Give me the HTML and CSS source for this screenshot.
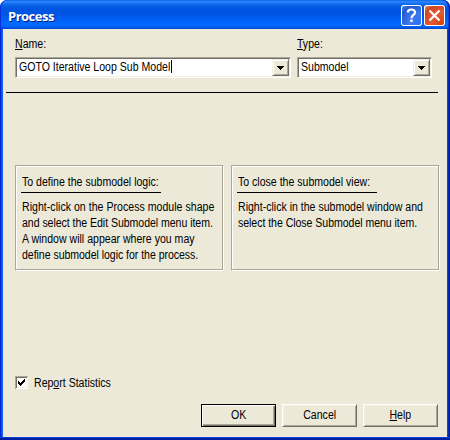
FILE: index.html
```html
<!DOCTYPE html>
<html lang="en">
<head>
<meta charset="utf-8">
<title>Process</title>
<link rel="stylesheet" href="styles.css">
</head>
<body>
<div class="window">
  <header class="titlebar">
    <h1>Process</h1>
    <button class="caption help" aria-label="Help">
      <svg width="21" height="21" viewBox="0 0 21 21"><path d="M6.8 7.5C6.8 3.6 14 3.4 14 7.4C14 10 10.5 9.8 10.5 13.2" fill="none" stroke="#fff" stroke-width="2.2"/><path d="M9.3 14.6h2.4v2.4H9.3z" fill="#fff"/></svg>
    </button>
    <button class="caption close" aria-label="Close">
      <svg width="21" height="21" viewBox="0 0 21 21"><path d="M5.5 5.5l10 10M15.5 5.5l-10 10" stroke="#fff" stroke-width="2.2"/></svg>
    </button>
  </header>
  <main class="client">
    <div class="fields">
      <div class="field name">
        <label><span class="text"><u>N</u>ame:</span></label>
        <div class="combo"><span class="value"><span class="text">GOTO Iterative Loop Sub Model</span></span><i class="caret"></i><span class="drop"><svg width="7" height="4" viewBox="0 0 7 4" shape-rendering="crispEdges"><path d="M0 0h7v1H0zM1 1h5v1H1zM2 2h3v1H2zM3 3h1v1H3z"/></svg></span></div>
      </div>
      <div class="field type">
        <label><span class="text"><u>T</u>ype:</span></label>
        <div class="combo"><span class="value"><span class="text">Submodel</span></span><span class="drop"><svg width="7" height="4" viewBox="0 0 7 4" shape-rendering="crispEdges"><path d="M0 0h7v1H0zM1 1h5v1H1zM2 2h3v1H2zM3 3h1v1H3z"/></svg></span></div>
      </div>
    </div>
    <div class="rule"></div>
    <div class="groups">
      <section class="group">
        <h2><span class="text">To define the submodel logic:</span></h2>
        <p><span class="text loose">Right-click on the Process module shape</span></p>
        <p><span class="text tight">and select the Edit Submodel menu item.</span></p>
        <p><span class="text">A window will appear where you may</span></p>
        <p><span class="text tight">define submodel logic for the process.</span></p>
      </section>
      <section class="group">
        <h2><span class="text">To close the submodel view:</span></h2>
        <p><span class="text">Right-click in the submodel window and</span></p>
        <p><span class="text tight">select the Close Submodel menu item.</span></p>
      </section>
    </div>
    <div class="check">
      <span class="box"><svg width="7" height="7" viewBox="0 0 7 7" shape-rendering="crispEdges"><path d="M0 2h1v1h1v1h1V3h1V2h1V1h1V0h1v3H6v1H5v1H4v1H3v1H2V6H1V5H0z"/></svg></span>
      <span class="text">Rep<u>o</u>rt Statistics</span>
    </div>
    <footer class="buttons">
      <button class="btn default"><span class="text mid">OK</span></button>
      <button class="btn"><span class="text mid">Cancel</span></button>
      <button class="btn"><span class="text mid"><u>H</u>elp</span></button>
    </footer>
  </main>
</div>
</body>
</html>
```
FILE: styles.css
```css
* { box-sizing: border-box; }
body { margin: 0; background: #fff; font: 12px/16px "Liberation Sans", Arial, sans-serif; color: #000; }
h1, h2, p { margin: 0; font-weight: normal; font-size: inherit; }
button { padding: 0; border: 0; font: inherit; color: inherit; }
svg { display: block; }
u { text-decoration: underline; text-underline-offset: 1px; text-decoration-thickness: 1px; text-decoration-skip-ink: none; }

/* condensed dialog lettering */
.text { display: inline-block; white-space: nowrap; transform: scaleX(.88); transform-origin: 0 50%; }
.loose { letter-spacing: .03px; }
.tight { letter-spacing: -.05px; }
.mid { transform-origin: 50% 50%; }

.window {
  width: 450px; height: 440px; display: flex; flex-direction: column;
  padding: 0 3px 3px; border-radius: 7px 7px 0 0; overflow: hidden;
  background: linear-gradient(90deg, #0019cf 0, #0831d9 1px, #166aee 2px, #0855dd 3px, #0855dd 447px, #0441d8 448px, #001ea0 449px, #00138c 450px);
  box-shadow: inset 0 -2px #001ea0, inset 0 -3px #0441d8;
}
.titlebar {
  height: 29px; margin: 0 -3px; padding: 5px 5px 0 8px; display: flex; gap: 2px; flex: none;
  background: linear-gradient(#0058e6 0, #2a82f8 1px, #2a86fa 2px, #0f6af0 4px, #0560e6 6px, #0055e2 9px, #0054e3 14px, #005ef4 19px, #0168ff 23px, #0066fb 26px, #0053e2 28px, #0041cd 29px);
  box-shadow: inset 1px 0 #0831d9, inset -1px 0 #001ea0, inset -2px 0 #0441d8;
  border-radius: 7px 7px 0 0;
}
.titlebar h1 { flex: 1; font: bold 13px/22px "Open Sans", sans-serif; letter-spacing: -.5px; color: #fff; text-shadow: 1px 1px #0a1f8c; }
.caption { width: 21px; height: 21px; border-radius: 3px; box-shadow: inset 0 0 0 1px #fff; }
.help { background: radial-gradient(circle at 85% 90%, #2c71fa, #3c78ee 40%, #2358d2 75%, #6f9bf2); }
.close { background: radial-gradient(circle at 85% 90%, #d54209, #e35a36 45%, #d0451f 75%, #f0a18c); }

.client { flex: 1; display: flex; flex-direction: column; background: #ece9d8; padding: 7px 8px 10px 12px; }
.fields { display: flex; gap: 6px; }
.name { width: 276px; }
.type { width: 135px; }
.field label { display: block; height: 21px; }
.combo {
  height: 21px; display: flex; background: #fff; border: 1px solid; border-color: #aca899 #fff #fff #aca899;
  box-shadow: inset 1px 1px #716f64, inset -1px -1px #f1efe2; padding: 1px; line-height: 17px;
}
.value { padding-left: 2px; }
.name .value { width: 154px; }
.caret { width: 1px; height: 13px; margin: 1px 0 0; background: #000; }
.drop, .btn { background: #ece9d8; }
.drop {
  margin-left: auto; width: 17px; height: 17px; display: flex; align-items: center; justify-content: center;
  border: 1px solid; border-color: #f1efe2 #716f64 #716f64 #f1efe2; box-shadow: inset 1px 1px #fff, inset -1px -1px #aca899;
}
.rule { height: 1px; margin: 14px 1px 0 -9px; background: #000; }

.groups { display: flex; gap: 7px; margin: 72px -1px 0 0; }
.group {
  width: 209px; height: 106px; padding: 8px 5px 0 6px;
  border: 1px solid #aca899; border-right-color: #fff; border-bottom-color: #fff;
  box-shadow: inset -1px -1px #aca899, inset 1px 1px #fff;
}
.group h2 { width: 140px; height: 19px; border-bottom: 1px solid #000; margin: 0 0 6px -1px; padding-left: 1px; }
.group p { height: 16px; }

.check { display: flex; align-items: flex-start; gap: 6px; margin-top: 104px; height: 16px; }
.box {
  width: 13px; height: 13px; margin-top: 1px; padding: 3px; background: #fff;
  box-shadow: inset 1px 1px #aca899, inset -1px -1px #fff, inset 2px 2px #716f64, inset -2px -2px #f1efe2;
}
.buttons { display: flex; gap: 6px; justify-content: flex-end; margin: auto 1px 0 0; }
.btn {
  width: 75px; height: 23px; line-height: 21px; border: 1px solid; border-color: #fff #716f64 #716f64 #fff;
  box-shadow: inset 1px 1px #f1efe2, inset -1px -1px #aca899;
}
.default { border-color: #000; box-shadow: inset 1px 1px #fff, inset -1px -1px #716f64, inset -2px -2px #aca899; }
```
